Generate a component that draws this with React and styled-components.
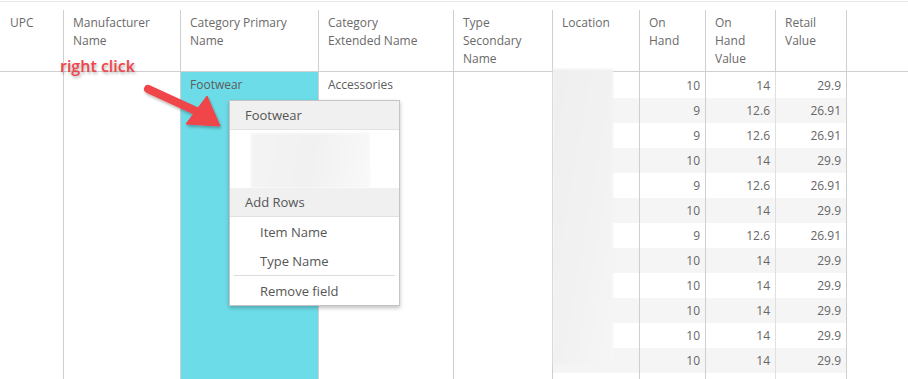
import React from "react";
import styled, { createGlobalStyle } from "styled-components";

const GlobalStyle = createGlobalStyle`
  body {
    margin: 0;
    background: #ffffff;
    font-family: "Open Sans", "Liberation Sans", sans-serif;
  }
`;

const columns = [
  { key: "upc", title: "UPC", width: 64 },
  { key: "mfr", title: "Manufacturer Name", width: 117 },
  { key: "cat1", title: "Category Primary Name", width: 138 },
  { key: "cat2", title: "Category Extended Name", width: 135 },
  { key: "type", title: "Type Secondary Name", width: 99 },
  { key: "loc", title: "Location", width: 87 },
  { key: "onhand", title: "On Hand", width: 66 },
  { key: "ohv", title: "On Hand Value", width: 70 },
  { key: "retail", title: "Retail Value", width: 71 },
];

const rows = [
  [10, 14, 29.9],
  [9, 12.6, 26.91],
  [9, 12.6, 26.91],
  [10, 14, 29.9],
  [9, 12.6, 26.91],
  [10, 14, 29.9],
  [9, 12.6, 26.91],
  [10, 14, 29.9],
  [10, 14, 29.9],
  [10, 14, 29.9],
  [10, 14, 29.9],
  [10, 14, 29.9],
];

const App = () => {
  return (
    <>
      <GlobalStyle />
      <Page>
        <TopRule />
        <HeaderRow>
          {columns.map((c) => (
            <HeadCell key={c.key} $w={c.width}>
              {c.title}
            </HeadCell>
          ))}
        </HeaderRow>
        <Body>
          <Col $w={64} />
          <Col $w={117} />
          <Col $w={138} $bg="#6cdde8">
            <TextCell>Footwear</TextCell>
          </Col>
          <Col $w={135}>
            <TextCell>Accessories</TextCell>
          </Col>
          <Col $w={99} />
          <Col $w={87}>
            {rows.map((r, i) => (
              <NumCell key={i} />
            ))}
            <Blur />
          </Col>
          {[0, 1, 2].map((ci) => (
            <Col key={ci} $w={[66, 70, 71][ci]} $light={ci > 0}>
              {rows.map((r, i) => (
                <NumCell key={i}>{r[ci]}</NumCell>
              ))}
            </Col>
          ))}
        </Body>

        <Note>right click</Note>
        <Arrow width="100" height="60" viewBox="0 0 100 60">
          <defs>
            <filter id="sh" x="-20%" y="-20%" width="140%" height="160%">
              <feDropShadow dx="1" dy="2" stdDeviation="1.5" floodColor="#000" floodOpacity="0.3" />
            </filter>
          </defs>
          <g filter="url(#sh)" fill="#f0444a" stroke="#f0444a">
            <line x1="8" y1="8" x2="56" y2="30" strokeWidth="8" strokeLinecap="round" />
            <polygon points="46,43 67,15 80,45" strokeWidth="1" strokeLinejoin="round" />
          </g>
        </Arrow>

        <Menu>
          <MenuHead>Footwear</MenuHead>
          <MenuBlurArea>
            <MenuBlur />
          </MenuBlurArea>
          <MenuHead>Add Rows</MenuHead>
          <MenuItem>Item Name</MenuItem>
          <MenuItem>Type Name</MenuItem>
          <MenuSep />
          <MenuItem>Remove field</MenuItem>
        </Menu>
      </Page>
    </>
  );
};

const Page = styled.div`
  position: relative;
  width: 908px;
  height: 379px;
  overflow: hidden;
  background: #ffffff;
`;
const TopRule = styled.div`
  margin-top: 1px;
  height: 1px;
  background: #e6e6e6;
`;
const HeaderRow = styled.div`
  display: flex;
  margin-top: 8px;
  height: 61px;
  border-bottom: 1px solid #cfcfcf;
`;
const HeadCell = styled.div`
  width: ${(p) => p.$w}px;
  flex-shrink: 0;
  box-sizing: border-box;
  padding: 4px 24px 0 9px;
  border-right: 1px solid #cfcfcf;
  font-size: 12px;
  line-height: 18px;
  color: #6a6a6a;
  &:first-child {
    padding-left: 10px;
  }
`;
const Body = styled.div`
  display: flex;
  height: 307px;
`;
const Col = styled.div`
  position: relative;
  width: ${(p) => p.$w}px;
  flex-shrink: 0;
  box-sizing: border-box;
  border-right: 1px solid ${(p) => (p.$light ? "#e0e0e0" : "#cfcfcf")};
  background: ${(p) => p.$bg || "transparent"};
  padding-top: 1px;
  &:last-child {
    border-right-color: #cfcfcf;
  }
`;
const TextCell = styled.div`
  height: 25px;
  padding-left: 9px;
  font-size: 12px;
  line-height: 24px;
  color: #5c5c5c;
`;
const NumCell = styled.div`
  height: 25px;
  padding-right: 5px;
  text-align: right;
  font-size: 12px;
  line-height: 25px;
  color: #666666;
  &:nth-child(even) {
    background: #f5f5f5;
  }
`;
const Blur = styled.div`
  position: absolute;
  left: 0;
  top: -3px;
  width: 60px;
  height: 296px;
  background: linear-gradient(100deg, #efefef 0%, #f2f2f2 60%, #f6f6f6 100%);
  filter: blur(1px);
`;
const Note = styled.div`
  position: absolute;
  left: 60px;
  top: 55px;
  font-size: 16px;
  font-weight: 600;
  color: #f0444a;
  text-shadow: 1px 2px 3px rgba(0, 0, 0, 0.3);
`;
const Arrow = styled.svg`
  position: absolute;
  left: 140px;
  top: 81px;
  overflow: visible;
`;
const Menu = styled.div`
  position: absolute;
  left: 229px;
  top: 100px;
  width: 169px;
  border: 1px solid #c4c4c4;
  background: #ffffff;
  box-shadow: 0 2px 4px rgba(0, 0, 0, 0.25);
  font-size: 13px;
  color: #555555;
`;
const MenuHead = styled.div`
  height: 28px;
  line-height: 28px;
  padding-left: 15px;
  background: #f0f0f0;
  border-bottom: 1px solid #e2e2e2;
`;
const MenuBlurArea = styled.div`
  height: 58px;
  padding: 3px 0 0 21px;
  box-sizing: border-box;
`;
const MenuBlur = styled.div`
  width: 119px;
  height: 55px;
  background: linear-gradient(100deg, #f4f4f4 0%, #f1f1f1 50%, #f9f9f9 100%);
  filter: blur(1px);
`;
const MenuItem = styled.div`
  height: 29px;
  line-height: 31px;
  padding-left: 30px;
`;
const MenuSep = styled.div`
  height: 1px;
  margin: 0 4px;
  background: #dcdcdc;
`;

export default App;
